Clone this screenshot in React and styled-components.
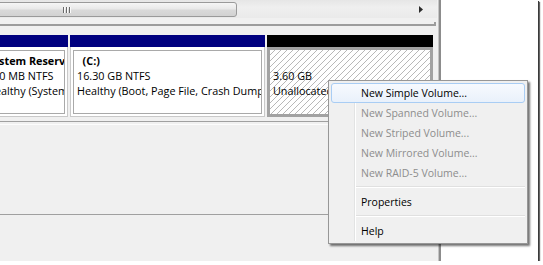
import React from "react";
import styled, { createGlobalStyle } from "styled-components";

const Global = createGlobalStyle`
  html, body { margin: 0; padding: 0; background: #fff; }
  body { font-family: "Open Sans", "Noto Sans", sans-serif; font-size: 10.5px; color: #000; }
  * { box-sizing: border-box; }
`;

const Shot = styled.div`
  position: relative;
  width: 538px;
  height: 261px;
  display: flex;
  overflow: hidden;
  box-shadow: 1px 1px 0 #3a3a3a, 2px 2px 1px rgba(0, 0, 0, 0.6);
`;

const LeftPane = styled.div`
  width: 438px;
  background: #f0f0f0;
  display: flex;
  flex-direction: column;
  overflow: hidden;
`;

const Divider = styled.div`
  width: 3px;
  border-left: 1px solid #c4c4c4;
  background: #8c8c8c;
`;

const WhiteArea = styled.div`
  flex: 1;
  background: #fff;
`;

const Scrollbar = styled.div`
  width: 437px;
  height: 18px;
  display: flex;
  align-items: stretch;
  background: linear-gradient(#e6e6e6, #efefef 40%, #eaeaea);
`;

const Thumb = styled.div`
  width: 240px;
  margin: 2px 0 1px -3px;
  border: 1px solid #9a9a9a;
  border-radius: 3px;
  background: linear-gradient(#f6f6f6, #e9e9e9 45%, #d9d9d9 55%, #d2d2d2);
  display: flex;
  align-items: center;
  padding-left: 65px;
`;

const Grip = styled.div`
  display: flex;
  gap: 2px;
  height: 6px;
  & > span {
    width: 1px;
    background: #6a6a6a;
    box-shadow: 1px 0 0 #fafafa;
  }
`;

const Track = styled.div`
  flex: 1;
`;

const ArrowBtn = styled.div`
  width: 18px;
  display: flex;
  align-items: center;
  justify-content: flex-start;
`;

const PaneEdge = styled.div`
  width: 436px;
  height: 7px;
  margin-top: 1px;
  display: flex;
  justify-content: flex-end;
  border-bottom: 2px solid #9c9c9c;
  &::after {
    content: "";
    width: 2px;
    height: 4px;
    margin-top: 3px;
    background: #9c9c9c;
  }
`;

const DiskRow = styled.div`
  padding: 9px 0 4px;
  border-bottom: 1px solid #a0a0a0;
  overflow: hidden;
`;

const Partitions = styled.div`
  display: flex;
  gap: 2px;
  margin-left: -20px;
`;

const Partition = styled.div`
  width: ${(p) => p.$w}px;
  flex: none;
  display: flex;
  flex-direction: column;
`;

const Header = styled.div`
  height: 12px;
  background: ${(p) => p.$color};
`;

const Body = styled.div`
  height: 70px;
  background: #fff;
  border: 1px solid #c9c9c9;
  border-top: none;
  padding: 3px 2px 2px;
  display: flex;
`;

const Inner = styled.div`
  flex: 1;
  min-width: 0;
  border: 1px solid #a9a9a9;
  padding: 2px 0 0 3px;
  overflow: hidden;
  white-space: nowrap;
`;

const HatchBody = styled.div`
  height: 70px;
  border: 3px solid #a2a2a2;
  padding: 3px 0 0 3px;
  overflow: hidden;
  white-space: nowrap;
  background: repeating-linear-gradient(
    135deg,
    #ffffff 0px,
    #ffffff 3.2px,
    #b8b8b8 3.2px,
    #b8b8b8 4.24px
  );
`;

const Line = styled.div`
  line-height: 15px;
  height: 15px;
  font-size: 10.8px;
  font-weight: ${(p) => (p.$bold ? 700 : 400)};
`;

const EmptyRow = styled.div`
  margin-top: 2px;
  height: 91px;
  border-top: 1px solid #fcfcfc;
  border-bottom: 1px solid #a0a0a0;
`;

const Menu = styled.div`
  position: absolute;
  left: 328px;
  top: 80px;
  width: 200px;
  padding: 2px;
  background: #f0f0f0;
  border: 1px solid #979797;
  box-shadow: 2px 2px 2px rgba(0, 0, 0, 0.55);
  &::before {
    content: "";
    position: absolute;
    left: 25px;
    top: 2px;
    bottom: 2px;
    width: 1px;
    background: #e2e3e3;
    border-right: 1px solid #fff;
  }
`;

const Item = styled.div`
  position: relative;
  height: 20px;
  line-height: 18px;
  padding-left: 29px;
  border: 1px solid ${(p) => (p.$hot ? "#a9cdf4" : "transparent")};
  border-radius: 3px;
  color: ${(p) => (p.$disabled ? "#8d8d8d" : "#000")};
  background: ${(p) =>
    p.$hot ? "linear-gradient(#f7fafe, #e9f1fb)" : "transparent"};
  white-space: nowrap;
`;

const Separator = styled.div`
  height: 2px;
  margin: 3px 0 4px 24px;
  background: #e0e0e0;
  border-bottom: 1px solid #fff;
`;

export default function App() {
  return (
    <>
      <Global />
      <Shot>
        <LeftPane>
          <Scrollbar>
            <Thumb>
              <Grip>
                <span />
                <span />
                <span />
              </Grip>
            </Thumb>
            <Track />
            <ArrowBtn>
              <svg width="4" height="7" viewBox="0 0 4 7">
                <path d="M0 0 L4 3.5 L0 7 Z" fill="#2b2b2b" />
              </svg>
            </ArrowBtn>
          </Scrollbar>
          <PaneEdge />
          <DiskRow>
            <Partitions>
              <Partition $w={88}>
                <Header $color="#00007f" />
                <Body>
                  <Inner>
                    <Line $bold>System Reserved</Line>
                    <Line>100 MB NTFS</Line>
                    <Line>Healthy (System, Active, Primary Partition)</Line>
                  </Inner>
                </Body>
              </Partition>
              <Partition $w={195}>
                <Header $color="#00007f" />
                <Body>
                  <Inner>
                    <Line $bold>{"\u00a0\u00a0(C:)"}</Line>
                    <Line>16.30 GB NTFS</Line>
                    <Line>Healthy (Boot, Page File, Crash Dump, Primary Partition)</Line>
                  </Inner>
                </Body>
              </Partition>
              <Partition $w={166}>
                <Header $color="#000" />
                <HatchBody>
                  <Line />
                  <Line>3.60 GB</Line>
                  <Line>Unallocated</Line>
                </HatchBody>
              </Partition>
            </Partitions>
          </DiskRow>
          <EmptyRow />
        </LeftPane>
        <Divider />
        <WhiteArea />
        <Menu>
          <Item $hot>New Simple Volume...</Item>
          <Item $disabled>New Spanned Volume...</Item>
          <Item $disabled>New Striped Volume...</Item>
          <Item $disabled>New Mirrored Volume...</Item>
          <Item $disabled>New RAID-5 Volume...</Item>
          <Separator />
          <Item>Properties</Item>
          <Separator />
          <Item>Help</Item>
        </Menu>
      </Shot>
    </>
  );
}
